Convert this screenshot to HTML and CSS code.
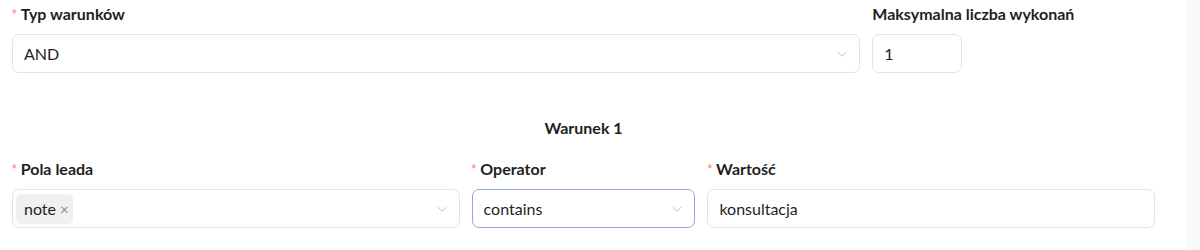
FILE: index.html
```html
<!DOCTYPE html>
<html lang="pl">
<head>
<meta charset="utf-8">
<link rel="stylesheet" href="styles.css">
</head>
<body>
<div class="page">
  <main class="main">
    <form class="form">
      <div class="row row-top">
        <div class="field">
          <label class="label"><span class="req">*</span>Typ warunków</label>
          <div class="control select">
            <span class="value">AND</span>
            <svg class="chev" viewBox="0 0 12 12" width="12" height="12"><path d="M2 4.2 L6 8.2 L10 4.2" fill="none" stroke="#bfbfbf" stroke-width="1"/></svg>
          </div>
        </div>
        <div class="field">
          <label class="label">Maksymalna liczba wykonań</label>
          <div class="control number"><span class="value">1</span></div>
        </div>
      </div>

      <h3 class="section-title">Warunek 1</h3>

      <div class="row row-cond">
        <div class="field">
          <label class="label"><span class="req">*</span>Pola leada</label>
          <div class="control select multi">
            <span class="tag">note<span class="tag-x">×</span></span>
            <svg class="chev" viewBox="0 0 12 12" width="12" height="12"><path d="M2 4.2 L6 8.2 L10 4.2" fill="none" stroke="#bfbfbf" stroke-width="1"/></svg>
          </div>
        </div>
        <div class="field">
          <label class="label"><span class="req">*</span>Operator</label>
          <div class="control select focused">
            <span class="value">contains</span>
            <svg class="chev" viewBox="0 0 12 12" width="12" height="12"><path d="M2 4.2 L6 8.2 L10 4.2" fill="none" stroke="#bfbfbf" stroke-width="1"/></svg>
          </div>
        </div>
        <div class="field">
          <label class="label"><span class="req">*</span>Wartość</label>
          <div class="control"><span class="value">konsultacja</span></div>
        </div>
      </div>
    </form>
  </main>
  <aside class="side"></aside>
</div>
</body>
</html>
```

FILE: styles.css
```css
* { box-sizing: border-box; }
html, body { margin: 0; padding: 0; background: #fff; }
body {
  font-family: Lato, "Open Sans", sans-serif;
  color: #1f1f1f;
  font-size: 16px;
}
.page {
  display: flex;
  width: 1200px;
  height: 250px;
  overflow: hidden;
}
.main {
  width: 1185px;
  padding: 3px 30px 0 12px;
}
.side {
  flex: 1;
  background: #f8fafc;
}
.form { width: 1143px; }
.row {
  display: grid;
  column-gap: 12px;
}
.row-top { grid-template-columns: 3fr 1fr; }
.row-cond { grid-template-columns: 2fr 1fr 2fr; }
.field {
  display: flex;
  flex-direction: column;
}
.label {
  font-weight: 700;
  font-size: 16px;
  line-height: 22px;
  margin-bottom: 9px;
  color: #1f1f1f;
}
.req {
  color: #ff7875;
  font-weight: 400;
  font-size: 12px;
  margin-right: 4px;
  font-family: SimSun, sans-serif;
  vertical-align: 2px;
}
.control {
  height: 39px;
  border: 1px solid #e4e4e4;
  border-radius: 7px;
  display: flex;
  align-items: center;
  padding: 0 11px;
  font-size: 16px;
  color: #1f1f1f;
  background: #fff;
}
.select { justify-content: space-between; }
.number { width: 90px; }
.focused { border-color: #8ea7e6; }
.multi { padding-left: 3px; }
.tag {
  display: inline-flex;
  align-items: center;
  height: 30px;
  padding: 0 4px 0 8px;
  background: #f0f0f0;
  border-radius: 5px;
}
.tag-x {
  color: #8c8c8c;
  font-size: 15px;
  margin-left: 4px;
}
.section-title {
  margin: 0;
  text-align: center;
  font-size: 16px;
  font-weight: 700;
  line-height: 22px;
  padding: 44px 0 19px;
}
```
